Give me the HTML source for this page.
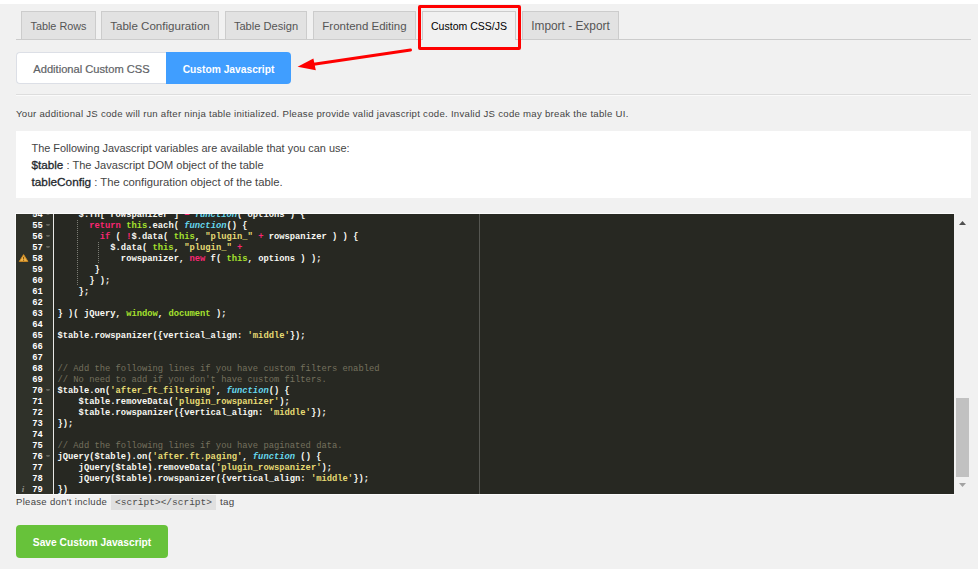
<!DOCTYPE html>
<html>
<head>
<meta charset="utf-8">
<title>Custom CSS/JS</title>
<style>
*{box-sizing:border-box;margin:0;padding:0}
html,body{width:978px;height:569px;overflow:hidden}
body{background:#f1f1f1;font-family:"Liberation Sans",sans-serif;position:relative;color:#444}
.abs{position:absolute}
#topstrip{left:0;top:0;width:978px;height:4px;background:#fff}
/* nav tabs */
#tabline{left:16px;top:39px;width:955px;height:1px;background:#ccc}
.tab{position:absolute;top:11px;height:28px;border:1px solid #ccc;border-bottom:none;background:#e2e2e2;color:#555;font-size:10.8px;line-height:28px;text-align:center;white-space:nowrap}
.tab.active{background:#f1f1f1;color:#000;height:29px}
/* red annotation */
#redbox{left:418px;top:5px;width:103px;height:45px;border:3px solid #fe0000;border-radius:2px}
/* sub tabs */
#sub1{left:16px;top:52px;width:150px;height:32px;background:#fff;border:1px solid #dcdfe6;border-right:none;border-radius:4px 0 0 4px;color:#606266;-webkit-text-stroke:0.2px #606266;font-size:11.15px;line-height:32px;text-align:center;white-space:nowrap}
#sub2{left:166px;top:52px;width:125px;height:32px;background:#409eff;border-radius:0 4px 4px 0;color:#fff;font-size:10.25px;font-weight:bold;line-height:32px;text-align:center;white-space:nowrap;padding-top:2px}
#hr1{left:16px;top:94px;width:955px;height:1px;background:#ddd}
#hr2{left:16px;top:95px;width:955px;height:1px;background:#fafafa}
#desc{left:16px;top:107px;font-size:9.60px;letter-spacing:0.278px;line-height:14px;white-space:nowrap;color:#444}
#info{left:16px;top:131px;width:955px;height:67px;background:#fff}
#info div{position:absolute;left:15.5px;white-space:nowrap;font-size:11.2px;line-height:17px;color:#444}
#info b{line-height:0;color:#23282d;font-weight:normal;-webkit-text-stroke:0.3px #23282d}
/* editor */
#editor{left:16px;top:214px;width:955px;height:280px;background:#f1f1f1;overflow:hidden}
#gutter{left:0;top:0;width:37px;height:280px;background:#2f3129}
#gline{left:37px;top:0;width:1px;height:280px;background:#e8e8e6}
#code{left:38px;top:0;width:900px;height:280px;background:#272822;overflow:hidden}
#pm{left:463px;top:0;width:1px;height:280px;background:#555651}
.ln{position:absolute;left:0;width:26.8px;height:11px;text-align:right;font-family:"Liberation Mono",monospace;font-size:8.8px;line-height:11px;color:#fff;font-weight:bold;white-space:pre;transform:scaleY(1.1);transform-origin:0 7.8px}
.fold{position:absolute;left:30px;width:4px;height:2px;background:#64655d;border-radius:0 0 2px 2px}
.cl{position:absolute;left:41.5px;height:11px;font-family:"Liberation Mono",monospace;font-size:8.8px;line-height:11px;color:#f8f8f2;white-space:pre;font-weight:bold;transform:scaleY(1.1);transform-origin:0 7.8px}
.k{color:#f92672}.s{color:#e6db74}.c{color:#75715e;font-weight:normal}.f{color:#66d9ef;font-style:italic}.v{color:#a6e22e}.p{color:#fd971f;font-style:italic}
.ig{position:absolute;width:1px;background-image:linear-gradient(to bottom,#7b7c74 50%,transparent 50%);background-size:1px 2px}
/* scrollbar */
#sbthumb{left:940px;top:184px;width:13px;height:79px;background:#c1c1c1}
/* footer */
#note{left:16px;top:495px;height:15px;font-size:9.5px;letter-spacing:0.32px;line-height:14px;white-space:nowrap;color:#444}
#codebox{left:111px;top:495px;width:105px;height:15px;background:#e0e0e0;font-family:"Liberation Mono",monospace;font-size:9.5px;line-height:16px;text-align:center;color:#4c4c4c;white-space:pre}
#tag{left:220px;top:495px;font-size:9.8px;letter-spacing:.3px;line-height:14px;color:#444}
#save{left:16px;top:525px;width:152px;height:33px;background:#67c23a;border-radius:4px;color:#fff;font-size:10.24px;font-weight:bold;line-height:33px;padding-top:1px;text-align:center;white-space:nowrap}
</style>
</head>
<body>
<div id="topstrip" class="abs"></div>

<div id="tabline" class="abs"></div>
<div class="tab" style="left:21px;width:75px;font-size:10.83px">Table Rows</div>
<div class="tab" style="left:101px;width:118px;font-size:11.57px">Table Configuration</div>
<div class="tab" style="left:225px;width:82px;font-size:11.12px">Table Design</div>
<div class="tab" style="left:313px;width:103px;font-size:11.49px">Frontend Editing</div>
<div class="tab active" style="left:422px;width:94px;font-size:10.52px">Custom CSS/JS</div>
<div class="tab" style="left:522px;width:97px;font-size:11.9px">Import - Export</div>

<div id="redbox" class="abs"></div>
<svg class="abs" style="left:290px;top:40px" width="130" height="40" viewBox="290 40 130 40">
  <line x1="410.5" y1="50" x2="312" y2="64.6" stroke="#fe0000" stroke-width="3" stroke-linecap="round"/>
  <polygon points="297.6,66.8 313.4,58.6 315.8,70.2" fill="#fe0000"/>
</svg>

<div id="sub1" class="abs">Additional Custom CSS</div>
<div id="sub2" class="abs">Custom Javascript</div>
<div id="hr1" class="abs"></div>
<div id="hr2" class="abs"></div>

<div id="desc" class="abs">Your additional JS code will run after ninja table initialized. Please provide valid javascript code. Invalid JS code may break the table UI.</div>

<div id="info" class="abs">
  <div style="top:9px;font-size:10.93px">The Following Javascript variables are available that you can use:</div>
  <div style="top:26px;font-size:11.07px"><b style="font-size:11.7px">$table</b> : The Javascript DOM object of the table</div>
  <div style="top:43px;font-size:11.28px"><b style="font-size:11.8px">tableConfig</b> : The configuration object of the table.</div>
</div>

<div id="halo" class="abs" style="left:15px;top:213px;width:940px;height:282px;background:#fbfbfb"></div>
<div id="editor" class="abs">
  <div id="gutter" class="abs"></div>
  <div id="gline" class="abs"></div>
  <div id="code" class="abs"></div>
  <div id="pm" class="abs"></div>
  <div id="lines">
<div class="ln" style="top:-4px">54</div>
<div class="fold" style="top:-1px"></div>
<div class="cl" style="top:-4px">    $.fn[ rowspanizer ] <span class="k">=</span> <span class="f">function</span>( options ) {</div>
<div class="ln" style="top:7px">55</div>
<div class="fold" style="top:10px"></div>
<div class="cl" style="top:7px">      <span class="k">return</span> <span class="v">this</span>.each( <span class="f">function</span>() {</div>
<div class="ln" style="top:18px">56</div>
<div class="fold" style="top:21px"></div>
<div class="cl" style="top:18px">        <span class="k">if</span> ( <span class="k">!</span>$.data( <span class="v">this</span>, <span class="s">&quot;plugin_&quot;</span> <span class="k">+</span> rowspanizer ) ) {</div>
<div class="ln" style="top:29px">57</div>
<div class="fold" style="top:32px"></div>
<div class="cl" style="top:29px">          $.data( <span class="v">this</span>, <span class="s">&quot;plugin_&quot;</span> <span class="k">+</span></div>
<div class="ln" style="top:40px">58</div>
<div class="cl" style="top:40px">            rowspanizer, <span class="k">new</span> f( <span class="v">this</span>, options ) );</div>
<div class="ln" style="top:51px">59</div>
<div class="cl" style="top:51px">       }</div>
<div class="ln" style="top:62px">60</div>
<div class="cl" style="top:62px">      } );</div>
<div class="ln" style="top:73px">61</div>
<div class="cl" style="top:73px">    };</div>
<div class="ln" style="top:84px">62</div>
<div class="ln" style="top:95px">63</div>
<div class="cl" style="top:95px">} )( jQuery, <span class="v">window</span>, <span class="v">document</span> );</div>
<div class="ln" style="top:106px">64</div>
<div class="ln" style="top:117px">65</div>
<div class="cl" style="top:117px">$table.rowspanizer({vertical_align: <span class="s">&#x27;middle&#x27;</span>});</div>
<div class="ln" style="top:128px">66</div>
<div class="ln" style="top:139px">67</div>
<div class="ln" style="top:150px">68</div>
<div class="cl" style="top:150px"><span class="c">// Add the following lines if you have custom filters enabled</span></div>
<div class="ln" style="top:161px">69</div>
<div class="cl" style="top:161px"><span class="c">// No need to add if you don&#x27;t have custom filters.</span></div>
<div class="ln" style="top:172px">70</div>
<div class="fold" style="top:175px"></div>
<div class="cl" style="top:172px">$table.on(<span class="s">&#x27;after_ft_filtering&#x27;</span>, <span class="f">function</span>() {</div>
<div class="ln" style="top:183px">71</div>
<div class="cl" style="top:183px">    $table.removeData(<span class="s">&#x27;plugin_rowspanizer&#x27;</span>);</div>
<div class="ln" style="top:194px">72</div>
<div class="cl" style="top:194px">    $table.rowspanizer({vertical_align: <span class="s">&#x27;middle&#x27;</span>});</div>
<div class="ln" style="top:205px">73</div>
<div class="cl" style="top:205px">});</div>
<div class="ln" style="top:216px">74</div>
<div class="ln" style="top:227px">75</div>
<div class="cl" style="top:227px"><span class="c">// Add the following lines if you have paginated data.</span></div>
<div class="ln" style="top:238px">76</div>
<div class="fold" style="top:241px"></div>
<div class="cl" style="top:238px">jQuery($table).on(<span class="s">&#x27;after.ft.paging&#x27;</span>, <span class="f">function</span> () {</div>
<div class="ln" style="top:249px">77</div>
<div class="cl" style="top:249px">    jQuery($table).removeData(<span class="s">&#x27;plugin_rowspanizer&#x27;</span>);</div>
<div class="ln" style="top:260px">78</div>
<div class="cl" style="top:260px">    jQuery($table).rowspanizer({vertical_align: <span class="s">&#x27;middle&#x27;</span>});</div>
<div class="ln" style="top:271px">79</div>
<div class="cl" style="top:271px">})</div>
<div class="ig" style="left:61px;top:6px;height:66px"></div>
<div class="ig" style="left:82px;top:28px;height:22px"></div>
<svg class="abs" style="left:2px;top:39px" width="11" height="11" viewBox="0 0 11 11"><polygon points="5.6,1.6 9.9,8.4 1.3,8.4" fill="#f0b34a" stroke="#d08a1f" stroke-width="0.9" stroke-linejoin="round"/><rect x="5.1" y="3.8" width="1" height="2.6" fill="#7a4f0c"/><rect x="5.1" y="6.9" width="1" height="0.9" fill="#7a4f0c"/></svg>
<div class="abs" style="left:4px;top:270px;width:6px;height:11px;font-family:'Liberation Serif',serif;font-style:italic;font-weight:bold;font-size:9px;line-height:11px;color:#8f908a;text-align:center">i</div>
</div>
  <div id="sbthumb" class="abs"></div>
  <svg class="abs" style="left:938px;top:0" width="17" height="280" viewBox="0 0 17 280">
    <polygon points="5,11 12,11 8.5,7" fill="#505050"/>
    <polygon points="5,269 12,269 8.5,273" fill="#a3a3a3"/>
  </svg>
</div>

<div id="note" class="abs">Please don't include</div>
<div id="codebox" class="abs">&lt;script&gt;&lt;/script&gt;</div>
<div id="tag" class="abs">tag</div>
<div id="save" class="abs">Save Custom Javascript</div>
</body>
</html>
